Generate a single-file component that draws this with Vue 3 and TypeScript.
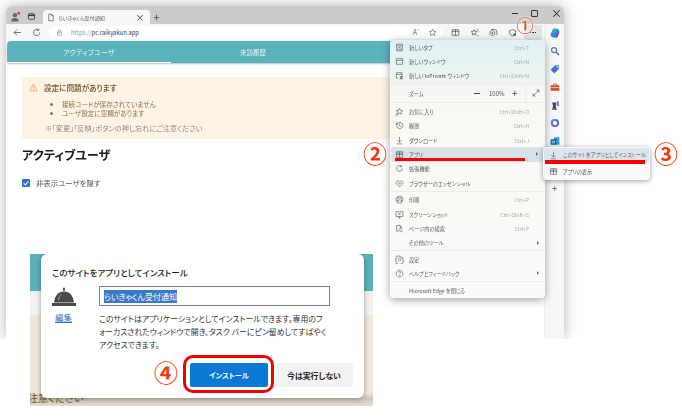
<script setup lang="ts">
interface MenuRow { label: string; key?: string; icon?: string; arrow?: boolean; active?: boolean }

const icons: Record<string, string> = {
  tab: 'M3 2h10v12H3zM3 5h10M3 11h10M6 8h4',
  win: 'M2.5 3h11v10h-11zM2.5 6h11',
  priv: 'M2.5 3h10v10h-4M2.5 3v10h3M2.5 6h10M11 9.5a1.6 1.6 0 1 0 .01 0M8.5 15c0-2 5-2 5 0',
  fav: 'M8 2.5l1.7 3.5 3.8.5-2.8 2.6.7 3.8L8 11l-3.4 1.9.7-3.8L2.5 6.500l3.800-.5zM1 12h2M1 14.500h4',
  hist: 'M3 8a5.500 5.500 0 1 0 1.500-3.800L2.500 6M2.500 2.500V6H6M8 5v3.500l2.500 1.500',
  down: 'M8 2v9M4.500 7.500L8 11l3.500-3.500M3 14h10',
  apps: 'M2.500 3h11v10h-11zM8 3v10M2.500 8h11M2.500 5.500h11',
  ext: 'M10 3.500A5 5 0 1 0 12.500 10M10.500 2v4M8.500 4h4M12.500 8v3',
  ess: 'M8 14L2.500 8.500C0 5 5 1.500 8 5c3-3.500 8 0 5.500 3.500zM5 7.500h1.500L8 9.500l1.500-2H11',
  print: 'M4.500 5.500V2.500h7v3M4.500 11H2V5.500h12V11h-2.500M4.500 9h7v5h-7z',
  shot: 'M2 3h12v8.500H2zM6 14h4M8 11.500V14M6 5l4 4M10 5l-4 4',
  find: 'M3 13V2.500h6L12 6v1M9 2.500V6h3M3 13h3M9.500 8a2.500 2.500 0 1 0 .01 0M11.500 12.500L14 15',
  set: 'M8 5.500a2.500 2.500 0 1 0 .01 0M7 1.800h2l.5 2 1.800.800 1.800-1 1.300 1.500-1 1.700.600 2 1.800.500v1.800l-1.800.700-.600 1.700 1 1.600-1.500 1.300-1.700-1-1.800.700-.400 1.800H7l-.5-1.800-1.800-.700-1.700 1L1.700 12.800l1-1.700-.700-1.800L.2 8.800V7l1.800-.5.800-1.900-1-1.700L3.300 1.500l1.700 1 1.700-.700z',
  help: 'M8 2a6 6 0 1 0 .01 0M6.300 6.300C6.300 4 10 4 10 6.300c0 1.500-2 1.500-2 3.200M8 11v1',
}

const groups: MenuRow[][] = [
  [
    { label: '新しいタブ', key: 'Ctrl+T', icon: 'tab' },
    { label: '新しいウィンドウ', key: 'Ctrl+N', icon: 'win' },
    { label: '新しい InPrivate ウィンドウ', key: 'Ctrl+Shift+N', icon: 'priv' },
  ],
  [
    { label: 'お気に入り', key: 'Ctrl+Shift+O', icon: 'fav' },
    { label: '履歴', key: 'Ctrl+H', icon: 'hist' },
    { label: 'ダウンロード', key: 'Ctrl+J', icon: 'down' },
    { label: 'アプリ', icon: 'apps', arrow: true, active: true },
    { label: '拡張機能', icon: 'ext' },
    { label: 'ブラウザーのエッセンシャル', icon: 'ess' },
  ],
  [
    { label: '印刷', key: 'Ctrl+P', icon: 'print' },
    { label: 'スクリーンショット', key: 'Ctrl+Shift+S', icon: 'shot' },
    { label: 'ページ内の検索', key: 'Ctrl+F', icon: 'find' },
    { label: 'その他のツール', arrow: true },
  ],
  [
    { label: '設定', icon: 'set' },
    { label: 'ヘルプとフィードバック', icon: 'help', arrow: true },
  ],
  [{ label: 'Microsoft Edge を閉じる' }],
]
</script>

<template>
  <div class="stage">
    <div class="browser">
      <header class="titlebar">
        <svg class="tb-ic" viewBox="0 0 16 16"><circle cx="8" cy="5" r="3.500" fill="#666" /><path d="M2 15c0-7 12-7 12 0z" fill="#666" /><circle cx="14" cy="2" r="2" fill="#e8112d" /></svg>
        <svg class="tb-ic tb-ic2" viewBox="0 0 16 16" fill="none" stroke="#333" stroke-width="1.500"><rect x="2.500" y="3" width="11" height="10" rx="2" /><path d="M2.500 6h11" stroke-width="2.500" /></svg>
        <div class="tab">
          <svg class="tab-doc" viewBox="0 0 16 16" fill="none" stroke="#444" stroke-width="1.300"><path d="M3.500 1.500h6l3 3v10h-9zM9.500 1.500v3h3" /></svg>
          <span class="tab-title">らいきゃくん受付通知</span>
          <span class="tab-x">×</span>
        </div>
        <span class="tab-plus">+</span>
        <span class="spacer"></span>
        <div class="wc-group">
          <span class="wc-min"></span>
          <span class="wc-max"></span>
          <span class="wc-x">×</span>
        </div>
      </header>

      <div class="toolbar">
        <svg class="nav-ic nav-back" viewBox="0 0 16 16" fill="none" stroke="#444" stroke-width="1.300"><path d="M14 8H2M7 3L2 8l5 5" /></svg>
        <svg class="nav-ic nav-ref" viewBox="0 0 16 16" fill="none" stroke="#444" stroke-width="1.300"><path d="M13.500 8a5.500 5.500 0 1 1-1.800-4M12 1v3.300H8.800" /></svg>
        <div class="address">
          <svg class="lock" viewBox="0 0 16 16" fill="none" stroke="#777" stroke-width="1.200"><rect x="3" y="7" width="10" height="7" /><path d="M5.500 7V4.500a2.500 2.500 0 0 1 5 0V7M7 10h2" /></svg>
          <span class="url"><span class="url-dim">https://</span>pc.raikyakun.app</span>
          <span class="spacer"></span>
          <span class="aa">A<sup>ᴬ</sup></span>
          <svg class="tool-ic" viewBox="0 0 16 16" fill="none" stroke="#555" stroke-width="1.100"><path d="M8 2l1.800 3.900 4.200.5-3.100 2.800.9 4.200L8 11.300l-3.800 2.100.9-4.200L2 6.400l4.200-.5z" /></svg>
        </div>
        <div class="tools">
          <svg class="tool-ic" viewBox="0 0 16 16" fill="none" stroke="#444" stroke-width="1.200"><rect x="2" y="3" width="12" height="10" rx="1" /><path d="M8 3v10M2 6h12" /></svg>
          <svg class="tool-ic" viewBox="0 0 16 16" fill="none" stroke="#444" stroke-width="1.200"><path d="M7 3l1.500 3 3.500.5-2.500 2.400.600 3.300L7 10.600l-3 1.600.600-3.300L2 6.500 5.500 6zM12 3h2.500M13.500 6H15M13 13.500h2" /></svg>
          <svg class="tool-ic" viewBox="0 0 16 16" fill="none" stroke="#444" stroke-width="1.200"><path d="M6 4.500a4.500 4.500 0 1 0 .01 0M4 2.500h6a4 4 0 0 1 4 4v6M6 7v4M4 9h4" /></svg>
          <svg class="tool-ic" viewBox="0 0 16 16" fill="none" stroke="#444" stroke-width="1.200"><path d="M2 5c3 0 4-1 6-2.500 2 1.500 3 2.500 6 2.500 0 5-1.500 7.500-6 9-4.500-1.500-6-4-6-9z" /><circle cx="12" cy="12" r="2.500" fill="#2e8b3d" stroke="none" /></svg>
        </div>
        <div class="more">
          <i></i><i></i><i></i>
        </div>
      </div>

      <div class="body">
        <main class="page">
          <nav class="page-tabs">
            <span class="ptab ptab-on">アクティブユーザ</span>
            <span class="ptab">来訪履歴</span>
          </nav>
          <section class="content">
            <div class="warn">
              <div class="warn-head">
                <svg class="warn-ic" viewBox="0 0 16 16" fill="none" stroke="#f5a33c" stroke-width="1.400"><path d="M8 2L1.500 14h13zM8 6.500v4M8 11.500v1.200" /></svg>
                <span>設定に問題があります</span>
              </div>
              <ul class="warn-list">
                <li>接続コードが保存されていません</li>
                <li>ユーザ設定に空欄があります</li>
              </ul>
              <p class="warn-note">※「変更」「反映」ボタンの押し忘れにご注意ください</p>
            </div>
            <h2 class="heading">アクティブユーザ</h2>
            <label class="check">
              <svg class="check-box" viewBox="0 0 10 10"><rect width="10" height="10" rx="1.200" fill="#2a74c6" /><path d="M2 5.200l2.200 2.200L8 3" fill="none" stroke="#fff" stroke-width="1.300" /></svg>
              <span>非表示ユーザを隠す</span>
            </label>
          </section>
        </main>
        <aside class="side">
          <svg class="side-ic side-first" viewBox="0 0 16 16"><path d="M5 1h6c2 0 3 1.500 4 5l-3 9H6C3 15 1.500 13.500 1 10z" fill="#2a8ad8" /><path d="M5 1h6L8 9H3z" fill="#18b5c6" /><path d="M9 8l6-2-3 9H7z" fill="#7c4fd6" /></svg>
          <svg class="side-ic" viewBox="0 0 16 16" fill="none"><circle cx="6.500" cy="6.500" r="4" stroke="#5a7fb8" stroke-width="2" /><path d="M10 10l4.500 4.500" stroke="#8a3fc8" stroke-width="2.200" /></svg>
          <svg class="side-ic" viewBox="0 0 16 16"><path d="M8 2h6v6l-7 7-6-6z" fill="#3c74d8" /><circle cx="11.500" cy="4.500" r="1.200" fill="#fff" /></svg>
          <svg class="side-ic" viewBox="0 0 16 16"><rect x="1" y="5" width="14" height="9" rx="1" fill="#c9502c" /><path d="M5.500 5V3h5v2" fill="none" stroke="#c9502c" stroke-width="1.300" /><path d="M1 9h14" stroke="#fff" /></svg>
          <svg class="side-ic" viewBox="0 0 16 16"><path d="M4 14h6l-1-6 1-1V3l-1 1H5L4 3v4l1 1z" fill="#444" /><path d="M3 14h8v1.500H3z" fill="#333" /><path d="M11 2h3v8h-3z" fill="#a05ad8" /></svg>
          <svg class="side-ic" viewBox="0 0 16 16" fill="none"><circle cx="8" cy="8" r="5" stroke="#5a5fd8" stroke-width="3" /><path d="M3 8a5 5 0 0 1 5-5" stroke="#3aa0e8" stroke-width="3" /></svg>
          <svg class="side-ic" viewBox="0 0 16 16"><rect x="6" y="2" width="9" height="12" rx="1" fill="#2a9ae0" /><rect x="1" y="5" width="9" height="9" rx="1" fill="#0f5fa8" /><circle cx="5.500" cy="9.500" r="2" fill="none" stroke="#fff" /></svg>
          <span class="side-plus">+</span>
        </aside>
      </div>
    </div>

    <!-- Edge "..." menu, floating over the page -->
    <div class="menu">
      <template v-for="(group, gi) in groups" :key="gi">
        <div class="menu-group" :class="{ 'menu-group-first': gi === 0 }">
          <div v-for="row in group" :key="row.label" class="menu-row" :class="{ 'menu-row-on': row.active }">
            <svg v-if="row.icon" class="menu-ic" viewBox="0 0 16 16" fill="none" stroke="#555" stroke-width="1.100"><path :d="icons[row.icon]" /></svg>
            <span v-else class="menu-ic"></span>
            <span class="menu-label">{{ row.label }}</span>
            <span class="menu-key">{{ row.key }}</span>
            <span v-if="row.arrow" class="menu-arrow"></span>
          </div>
        </div>
        <div class="menu-zoom" v-if="gi === 0">
          <span class="zoom-label">ズーム</span>
          <span class="zoom-minus"></span>
          <span class="zoom-val">100%</span>
          <span class="zoom-plus">+</span>
          <span class="zoom-full">
            <svg viewBox="0 0 16 16" fill="none" stroke="#444" stroke-width="1.200"><path d="M2 14L14 2M9 2h5v5M2 9v5h5" /></svg>
          </span>
        </div>
      </template>
      <span class="redbar redbar-apps"></span>
    </div>

    <div class="submenu">
      <div class="sub-row sub-row-on">
        <svg class="menu-ic" viewBox="0 0 16 16" fill="none" stroke="#555" stroke-width="1.100"><path :d="icons.down" /></svg>
        <span>このサイトをアプリとしてインストール</span>
        <span class="redbar redbar-sub"></span>
      </div>
      <div class="sub-row">
        <svg class="menu-ic" viewBox="0 0 16 16" fill="none" stroke="#555" stroke-width="1.100"><path :d="icons.apps" /></svg>
        <span>アプリの表示</span>
      </div>
    </div>

    <!-- Pasted capture of the install dialog -->
    <div class="shot">
      <div class="shot-teal"></div>
      <div class="shot-white"></div>
      <div class="shot-beige"><span class="shot-peek">注意ください</span></div>
      <div class="dialog">
        <h3 class="dlg-title">このサイトをアプリとしてインストール</h3>
        <div class="dlg-main">
          <div class="dlg-left">
            <svg class="bell" viewBox="0 0 24 20"><path d="M11 1.500h2M12 1.500v2.500" stroke="#444" stroke-width="1.500" fill="none" /><path d="M2 15.500a10 11 0 0 1 20 0z" fill="#4a4a4a" /><path d="M6.500 13c.3-3 1.500-4.500 3-5.500" stroke="#aaa" stroke-width="1" fill="none" /><path d="M0 16h24v3H0z" fill="#4a4a4a" /></svg>
            <a class="dlg-edit">編集</a>
          </div>
          <div class="dlg-right">
            <div class="dlg-input"><span class="dlg-sel">らいきゃくん受付通知</span></div>
            <p class="dlg-desc">このサイトはアプリケーションとしてインストールできます。専用のフ<br />ォーカスされたウィンドウで開き、タスク バーにピン留めしてすばやく<br />アクセスできます。</p>
          </div>
        </div>
        <div class="dlg-actions">
          <button class="btn btn-primary" type="button">インストール</button>
          <button class="btn btn-ghost" type="button">今は実行しない</button>
        </div>
      </div>
      <span class="red-ring"></span>
    </div>

    <span class="mark mark1">①</span>
    <span class="mark mark2">②</span>
    <span class="mark mark3">③</span>
    <span class="mark mark4">④</span>
  </div>
</template>

<style>
html, body { margin: 0; padding: 0; background: #fff; }
</style>

<style scoped>
.stage {
  position: relative;
  width: 682px;
  height: 420px;
  overflow: hidden;
  background: #fff;
  font-family: "Noto Sans CJK JP", "Noto Sans", sans-serif;
  font-feature-settings: "palt";
  padding-top: 6px;
  box-sizing: border-box;
}
.spacer { flex: 1; }

/* browser */
.browser {
  width: 558px;
  height: 333px;
  margin-left: 6px;
  display: flex;
  flex-direction: column;
  background: #fff;
  border-radius: 6px 6px 0 0;
  box-shadow: 0 0 14px rgba(0, 0, 0, .3);
  clip-path: inset(-20px -20px 0 -20px);
  filter: blur(.4px);
}
.titlebar {
  height: 18px;
  background: #cbcbcb;
  border-radius: 6px 6px 0 0;
  display: flex;
  align-items: flex-end;
  position: relative;
}
.tb-ic { width: 10px; height: 10px; margin: 0 0 2px 4px; }
.tb-ic2 { margin-left: 7px; width: 9px; height: 9px; margin-bottom: 3px; }
.tab {
  margin-left: 6.500px;
  width: 107px;
  height: 14px;
  background: #f7f7f7;
  border-radius: 4px 4px 0 0;
  display: flex;
  align-items: center;
  box-sizing: border-box;
  padding: 0 5px 0 4px;
}
.tab-doc { width: 8px; height: 9px; }
.tab-title { font-size: 5.100px; color: #666; margin-left: 4px; flex: 1; white-space: nowrap; }
.tab-x { font-size: 9px; color: #333; }
.tab-plus { font-size: 11px; color: #444; margin: 0 0 0 4px; line-height: 14px; }
.wc-group {
  align-self: flex-start;
  height: 14px;
  width: 56px;
  margin-top: 0;
  display: flex;
  align-items: center;
  position: relative;
}
.wc-min { width: 6px; height: 1px; background: #333; margin-left: 4px; }
.wc-max { width: 5px; height: 5px; border: 1px solid #333; border-radius: 1px; margin-left: 13px; }
.wc-x { font-size: 11px; color: #222; line-height: 14px; margin-left: 13px; }

.toolbar {
  height: 17px;
  background: #f7f7f7;
  display: flex;
  align-items: center;
}
.nav-ic { width: 9px; height: 9px; }
.nav-back { margin-left: 7px; }
.nav-ref { margin-left: 10px; }
.address {
  margin-left: 8px;
  width: 393px;
  height: 13px;
  background: #fff;
  border-radius: 7px;
  display: flex;
  align-items: center;
  box-sizing: border-box;
  padding: 0 5px 0 7px;
}
.lock { width: 7px; height: 7px; }
.url { font-size: 5.900px; color: #444; margin-left: 8px; }
.url-dim { color: #999; }
.aa { font-size: 7px; color: #666; margin-right: 9px; line-height: 1; }
.aa sup { font-size: 5px; line-height: 0; }
.tool-ic { width: 9px; height: 9px; display: block; }
.tools { display: flex; gap: 10px; margin-left: 9px; align-items: center; }
.more {
  margin-left: 7px;
  width: 18px;
  height: 15px;
  background: #e3e3e3;
  border-radius: 2px;
  display: flex;
  align-items: center;
  justify-content: center;
  gap: 1px;
}
.more i { width: 1.500px; height: 1.500px; background: #333; display: block; }

.body { flex: 1; display: flex; min-height: 0; }
.page { flex: 1; min-width: 0; display: flex; flex-direction: column; padding-left: 1px; }
.page-tabs {
  height: 22px;
  background: #5ab2bd;
  border-radius: 4px 0 0 0;
  display: grid;
  grid-template-columns: 164px 164px 1fr;
  box-shadow: 0 1px 2px rgba(0, 0, 0, .25);
  position: relative;
}
.ptab {
  font-size: 6.500px;
  color: #e6f3f5;
  display: flex;
  align-items: center;
  justify-content: center;
  height: 22px;
  box-sizing: border-box;
}
.ptab-on { border-bottom: 1px solid #fff; font-size: 7.200px; }
.content { padding: 14px 0 0 15px; flex: 1; }
.warn {
  height: 62px;
  background: #fff3e6;
  box-sizing: border-box;
  padding: 5px 0 0 7px;
}
.warn-head {
  display: flex;
  align-items: center;
  gap: 6px;
  font-size: 7.600px;
  font-weight: 500;
  color: #6d5126;
  line-height: 11px;
}
.warn-ic { width: 9px; height: 9px; }
.warn-list {
  margin: 7px 0 0;
  padding: 0 0 0 33px;
  font-size: 6.600px;
  line-height: 9px;
  color: #8c7248;
  list-style: disc;
}
.warn-note { margin: 6px 0 0 16px; font-size: 7.200px; line-height: 9px; color: #948b7e; }
.heading { margin: 8px 0 0; font-size: 12.200px; line-height: 16px; font-weight: 700; color: #1a1a1a; }
.check { display: flex; align-items: center; gap: 6px; margin-top: 15px; font-size: 7.400px; color: #555; line-height: 9px; }
.check-box { width: 8px; height: 8px; }
.side {
  width: 20px;
  background: #f7f7f7;
  display: flex;
  flex-direction: column;
  align-items: center;
  margin-top: -17px;
  position: relative;
  border-left: 1px solid #eee;
  box-sizing: border-box;
}
.side-ic { width: 10px; height: 10px; margin-top: 8px; display: block; }
.side-first { margin-top: 4px; }
.side-plus { font-size: 10px; line-height: 12px; color: #666; margin-top: 36px; }

/* menu */
.menu {
  position: absolute;
  left: 390px;
  top: 40px;
  width: 155px;
  height: 258px;
  border-radius: 4px;
  background: linear-gradient(180deg, #dff0f3 0%, #e9f3f3 12%, #faf8f3 24%, #faf9f6 60%, #fafafa 100%);
  box-shadow: 0 2px 8px rgba(0, 0, 0, .38);
  filter: blur(.3px);
  font-size: 5.200px;
  color: #666;
}
.menu-group { border-top: 1px solid #efece6; padding-top: 1px; }
.menu-group-first { border-top: 0; padding-top: 0; }
.menu-row {
  height: 14.400px;
  display: flex;
  align-items: center;
  padding: 0 16px 0 5px;
  position: relative;
}
.menu-row-on { background: #d6e1ea; margin: 0 1px 0 1px; padding: 0 15px 0 4px; border-radius: 2px; }
.menu-ic { width: 9px; height: 9px; display: block; flex: none; }
.menu-label { margin-left: 5px; white-space: nowrap; color: #5a5a5a; }
.menu-key { margin-left: auto; color: #a8a8a8; font-size: 5.200px; }
.menu-arrow { position: absolute; right: 6px; top: 5px; border-left: 2.500px solid #666; border-top: 2px solid transparent; border-bottom: 2px solid transparent; }
.menu-zoom {
  height: 18px;
  border-top: 1px solid #efece6;
  display: flex;
  align-items: center;
  padding-left: 19px;
  position: relative;
}
.zoom-label { color: #5a5a5a; }
.zoom-minus { position: absolute; left: 84px; top: 9px; width: 6px; height: 1px; background: #444; }
.zoom-val { position: absolute; left: 99px; top: 5px; font-size: 6px; color: #555; }
.zoom-plus { position: absolute; left: 122px; top: 3px; font-size: 10px; line-height: 12px; color: #444; }
.zoom-full { position: absolute; left: 135px; top: 0; bottom: 0; width: 20px; border-left: 1px solid #efece6; display: flex; align-items: center; justify-content: center; }
.zoom-full svg { width: 8px; height: 8px; }
.redbar { position: absolute; background: #f60000; display: block; }
.redbar-apps { left: 5px; top: 117.500px; width: 130px; height: 3.500px; }

.submenu {
  position: absolute;
  left: 543px;
  top: 147px;
  width: 107px;
  height: 33px;
  background: #faf9f7;
  border-radius: 4px;
  box-shadow: 0 1px 5px rgba(0, 0, 0, .4);
  font-size: 5.200px;
  color: #555;
  padding: 1px;
  box-sizing: border-box;
  filter: blur(.3px);
  white-space: nowrap;
}
.sub-row {
  height: 15px;
  display: flex;
  align-items: center;
  gap: 5px;
  padding-left: 5px;
  position: relative;
  margin-bottom: 1px;
}
.sub-row-on { background: #dde5ec; border-radius: 2px; }
.sub-row-on span:first-of-type { position: relative; top: -1px; }
.redbar-sub { left: 1px; top: 12px; width: 100px; height: 3.500px; }

/* dialog capture */
.shot {
  position: absolute;
  left: 30px;
  top: 254px;
  width: 343px;
  height: 152px;
  display: flex;
  flex-direction: column;
  background: #efe6da;
  overflow: hidden;
}
.shot-teal { height: 37px; background: #5cb1b8; box-shadow: 0 1px 2px rgba(0, 0, 0, .2); }
.shot-white { height: 24px; background: #f1f1f1; }
.shot-beige { flex: 1; position: relative; background: linear-gradient(180deg, #efe6da 0, #efe6da 86%, #cfc6ba 92%, #e4ddd2 100%); }
.shot-peek { position: absolute; left: -2px; bottom: 3px; font-size: 10px; line-height: 11px; color: #6d5126; white-space: nowrap; }
.dialog {
  position: absolute;
  left: 11px;
  top: 0;
  width: 323px;
  height: 144px;
  background: #fff;
  border-radius: 6px;
  box-shadow: 0 1px 5px rgba(0, 0, 0, .35);
  box-sizing: border-box;
  padding: 12px 11px 0;
  color: #333;
}
.dlg-title { margin: 0; font-size: 8.500px; line-height: 13px; font-weight: 500; color: #222; }
.dlg-main { display: flex; margin-top: 8px; }
.dlg-left { width: 47px; flex: none; display: flex; flex-direction: column; align-items: flex-start; }
.bell { width: 24px; height: 20px; }
.dlg-edit { margin: 4px 0 0 3px; font-size: 8.500px; line-height: 12px; color: #2a6fc0; text-decoration: underline; }
.dlg-right { flex: 1; min-width: 0; }
.dlg-input {
  width: 231px;
  height: 20px;
  margin-top: -1px;
  border: 1.500px solid #7f7f7f;
  box-sizing: border-box;
  padding: 2px 4px;
  display: flex;
  align-items: center;
  font-size: 8px;
}
.dlg-sel { background: #3a78c8; color: #fff; line-height: 13px; white-space: nowrap; }
.dlg-desc { margin: 6px 0 0; font-size: 7.900px; line-height: 13px; color: #333; white-space: nowrap; }
.dlg-actions { position: absolute; right: 11px; bottom: 11px; display: flex; gap: 7px; }
.btn { height: 24px; width: 78px; border: 0; border-radius: 2px; font-family: inherit; font-feature-settings: "palt"; font-weight: 700; padding: 0; }
.btn-primary { background: #0b78d6; color: #fff; font-size: 7.200px; }
.btn-ghost { background: #f2f2f2; color: #222; font-size: 7.900px; }
.red-ring {
  position: absolute;
  left: 153px;
  top: 101px;
  width: 91px;
  height: 38px;
  border: 3px solid #f00000;
  border-radius: 10px;
  box-sizing: border-box;
}

/* annotations */
.mark {
  position: absolute;
  color: #ef3a0f;
  font-family: "Noto Sans CJK JP", sans-serif;
  line-height: 1;
  transform: translate(-50%, -50%);
  text-shadow: 0 0 2px #fff, 0 0 2px #fff;
}
.mark1 { left: 525px; top: 24px; font-size: 17px; font-weight: 500; }
.mark2 { left: 375px; top: 153px; font-size: 24px; font-weight: 700; }
.mark3 { left: 666px; top: 153px; font-size: 24px; font-weight: 700; }
.mark4 { left: 166px; top: 372px; font-size: 24px; font-weight: 700; }
</style>
